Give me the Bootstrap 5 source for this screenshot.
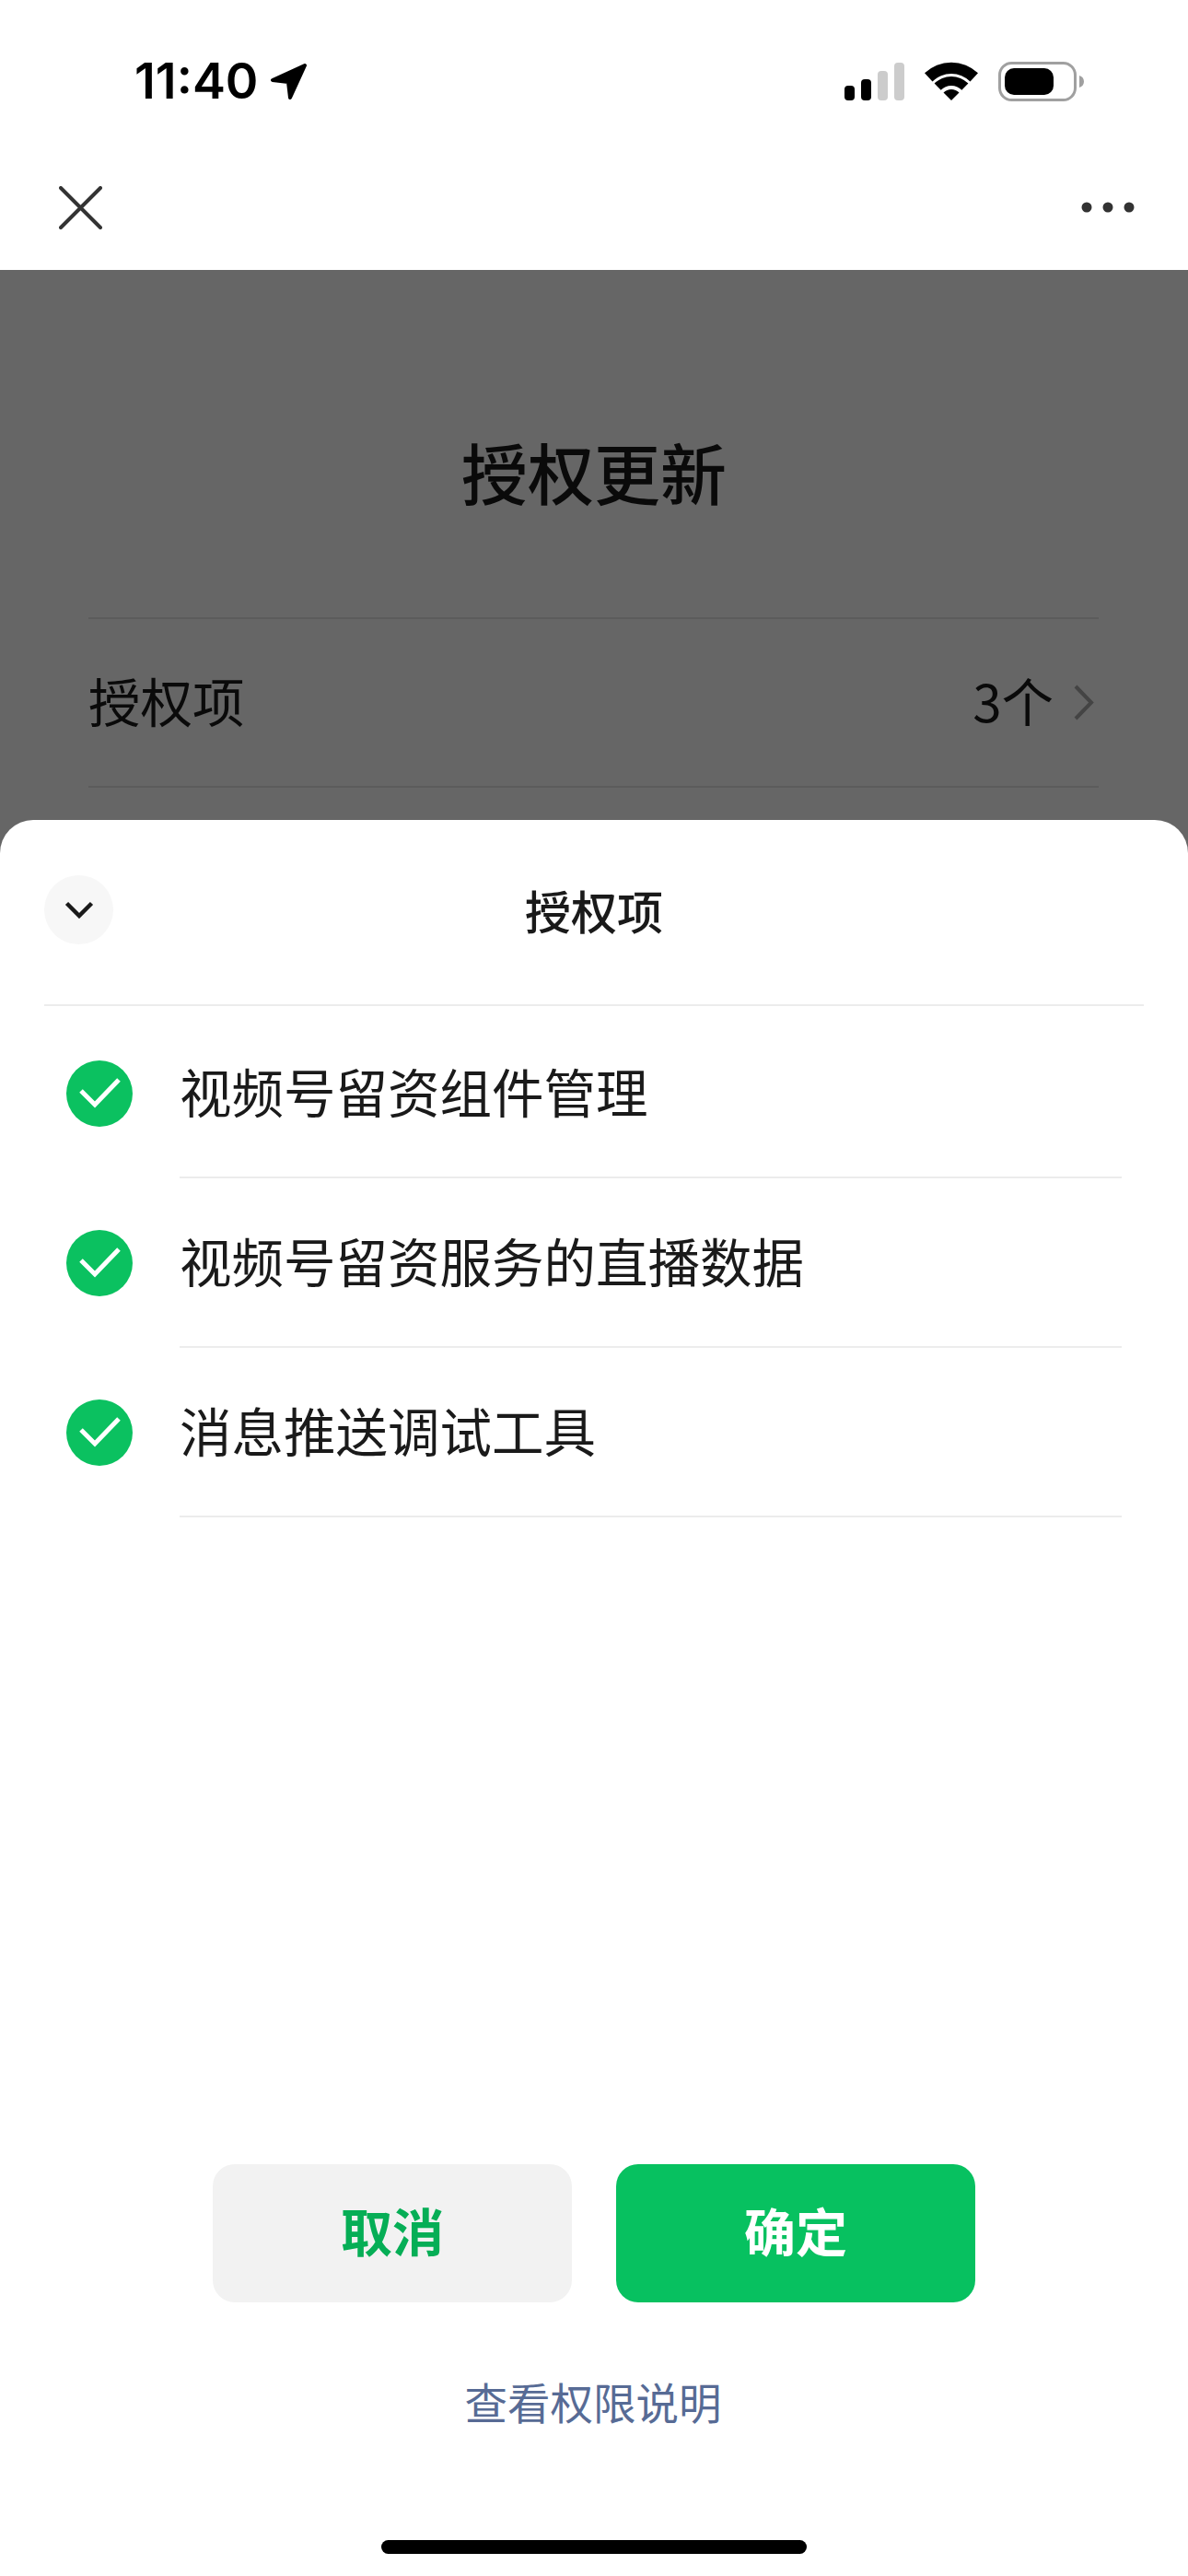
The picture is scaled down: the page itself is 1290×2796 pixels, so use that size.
<!DOCTYPE html>
<html lang="zh-CN">
<head>
    <meta charset="UTF-8">
    <meta name="viewport" content="width=device-width, initial-scale=1.0">
    <title>授权更新</title>
    <link rel="stylesheet" href="https://cdn.jsdelivr.net/npm/bootstrap@5.3.1/dist/css/bootstrap.min.css">
    <style>
        body { margin: 0; background: #fff; font-family: "Noto Sans CJK SC", "Liberation Sans", sans-serif; color: #1a1a1a; }
        .phone { width: 1290px; height: 2796px; overflow: hidden; }
        .status-row { height: 60px; margin-top: 58px; padding: 0 113px 0 146px; }
        .status-time { font-family: Inter, sans-serif; font-weight: 600; font-size: 54px; line-height: 60px; color: #000; }
        .status-left { gap: 13px; }
        .status-icons { gap: 22px; }
        .top-nav { height: 113px; margin-top: 62px; padding: 0 58px 23px 64px; }
        .dim-page { height: 2503px; background: #666; color: #0a0a0a; }
        .dim-title { font-size: 72px; font-weight: 500; line-height: 100px; padding-top: 168px; margin-bottom: 109px; }
        .dim-row { margin: 0 97px 0 96px; padding-right: 5px; height: 185px; border-top: 2px solid #5c5c5c; border-bottom: 2px solid #5c5c5c; font-size: 56.5px; }
        .dim-label { margin-bottom: 6px; }
        .dim-value { gap: 21px; }
        .sheet { top: 890px; background: #fff; border-radius: 36px 36px 0 0; }
        .sheet-head { height: 202px; margin: 0 48px; padding-bottom: 5px; border-bottom: 2px solid #ececec; }
        .round-btn { width: 75px; height: 75px; background: #f7f7f7; }
        .sheet-title { font-size: 50px; font-weight: 500; }
        .perm-list { padding: 3px 72px 0; }
        .perm-row { height: 184px; gap: 51px; font-size: 56.5px; background: transparent; border: 0; padding: 0; color: #1a1a1a; }
        .perm-text { height: 184px; padding-bottom: 6px; border-bottom: 2px solid #ececec; }
        .btn-row { gap: 48px; }
        .sheet-btn { width: 390px; height: 150px; border: 0; border-radius: 24px; padding: 0 0 9px; font-size: 56px; font-weight: 700; }
        .btn-cancel, .btn-cancel:hover { background: #f2f2f2; color: #06ae56; }
        .btn-ok, .btn-ok:hover { background: #07c160; color: #fff; }
        .perm-link { font-size: 46.5px; line-height: 64px; margin-top: 75px; margin-bottom: 2px; margin-right: 2px; color: #576b95; text-decoration: none; }
        .home-bar { width: 462px; height: 15px; margin: 117px auto 24px; background: #000; }
    </style>
</head>
<body>
    <div class="phone position-relative">
        <div class="status-row d-flex justify-content-between align-items-center">
            <div class="status-left d-flex align-items-center">
                <span class="status-time">11:40</span>
                <svg width="41" height="40" viewBox="0 0 41 40"><path d="M38 3L3 19L20 21L22 38Z" fill="#000" stroke="#000" stroke-width="4" stroke-linejoin="round"/></svg>
            </div>
            <div class="d-flex align-items-center status-icons">
                <svg width="65" height="41" viewBox="0 0 65 41">
                    <rect x="0" y="25" width="11" height="16" rx="4" fill="#000"/>
                    <rect x="18" y="18" width="11" height="23" rx="4" fill="#000"/>
                    <rect x="36" y="9" width="11" height="32" rx="4" fill="#ccc"/>
                    <rect x="54" y="0" width="11" height="41" rx="4" fill="#ccc"/>
                </svg>
                <svg width="58" height="42" viewBox="0 0 58 42">
                    <path d="M0 12.3A42 42 0 0 1 58 12.3L49.5 21.5A29 29 0 0 0 8.5 21.5Z" fill="#000"/>
                    <path d="M10.6 23.6A26 26 0 0 1 47.4 23.6L40.3 30.7A16 16 0 0 0 17.7 30.7Z" fill="#000"/>
                    <path d="M20.5 33.5A12 12 0 0 1 37.5 33.5L29 42Z" fill="#000"/>
                </svg>
                <svg width="93" height="43" viewBox="0 0 93 43">
                    <rect x="1.5" y="1.5" width="82" height="40" rx="13" fill="none" stroke="#a0a0a0" stroke-width="3"/>
                    <rect x="7" y="7" width="53" height="29" rx="10" fill="#000"/>
                    <path d="M88 15C91 16 93 18 93 21.5C93 25 91 27 88 28Z" fill="#a0a0a0"/>
                </svg>
            </div>
        </div>

        <nav class="top-nav d-flex justify-content-between align-items-center">
            <svg width="47" height="47" viewBox="0 0 47 47"><path d="M2 2L45 45M45 2L2 45" stroke="#333" stroke-width="4" stroke-linecap="round"/></svg>
            <svg width="58" height="12" viewBox="0 0 58 12" fill="#333">
                <circle cx="6" cy="6" r="5.5"/><circle cx="29" cy="6" r="5.5"/><circle cx="52" cy="6" r="5.5"/>
            </svg>
        </nav>

        <div class="dim-page">
            <div class="dim-title text-center">授权更新</div>
            <div class="dim-row d-flex justify-content-between align-items-center">
                <span class="dim-label">授权项</span>
                <span class="dim-value d-flex align-items-center">
                    <span class="dim-label">3个</span>
                    <svg width="23" height="39" viewBox="0 0 23 39"><path d="M3 2L20 19.5L3 37" fill="none" stroke="#444" stroke-width="4"/></svg>
                </span>
            </div>
        </div>

        <div class="sheet position-absolute start-0 end-0 bottom-0 d-flex flex-column">
            <div class="sheet-head d-flex align-items-center">
                <div class="round-btn rounded-circle d-flex align-items-center justify-content-center flex-shrink-0">
                    <svg width="32" height="19" viewBox="0 0 32 19"><path d="M2.5 2.5L16 16L29.5 2.5" fill="none" stroke="#1a1a1a" stroke-width="4.5"/></svg>
                </div>
                <div class="sheet-title flex-grow-1 text-center">授权项</div>
                <div class="round-btn invisible flex-shrink-0"></div>
            </div>

            <div class="perm-list list-group list-group-flush">
                <div class="perm-row list-group-item d-flex align-items-center">
                    <svg class="flex-shrink-0" width="72" height="72" viewBox="0 0 72 72"><circle cx="36" cy="36" r="36" fill="#0bc160"/><path d="M16 33L31 48L57 21" fill="none" stroke="#fff" stroke-width="5"/></svg>
                    <div class="perm-text flex-grow-1 d-flex align-items-center">视频号留资组件管理</div>
                </div>
                <div class="perm-row list-group-item d-flex align-items-center">
                    <svg class="flex-shrink-0" width="72" height="72" viewBox="0 0 72 72"><circle cx="36" cy="36" r="36" fill="#0bc160"/><path d="M16 33L31 48L57 21" fill="none" stroke="#fff" stroke-width="5"/></svg>
                    <div class="perm-text flex-grow-1 d-flex align-items-center">视频号留资服务的直播数据</div>
                </div>
                <div class="perm-row list-group-item d-flex align-items-center">
                    <svg class="flex-shrink-0" width="72" height="72" viewBox="0 0 72 72"><circle cx="36" cy="36" r="36" fill="#0bc160"/><path d="M16 33L31 48L57 21" fill="none" stroke="#fff" stroke-width="5"/></svg>
                    <div class="perm-text flex-grow-1 d-flex align-items-center">消息推送调试工具</div>
                </div>
            </div>

            <div class="mt-auto d-flex flex-column align-items-center">
                <div class="btn-row d-flex justify-content-center">
                    <button type="button" class="btn sheet-btn btn-cancel">取消</button>
                    <button type="button" class="btn sheet-btn btn-ok">确定</button>
                </div>
                <a class="perm-link" href="#">查看权限说明</a>
                <div class="home-bar rounded-pill"></div>
            </div>
        </div>
    </div>

    <script src="https://cdn.jsdelivr.net/npm/bootstrap@5.3.1/dist/js/bootstrap.bundle.min.js"></script>
</body>
</html>
